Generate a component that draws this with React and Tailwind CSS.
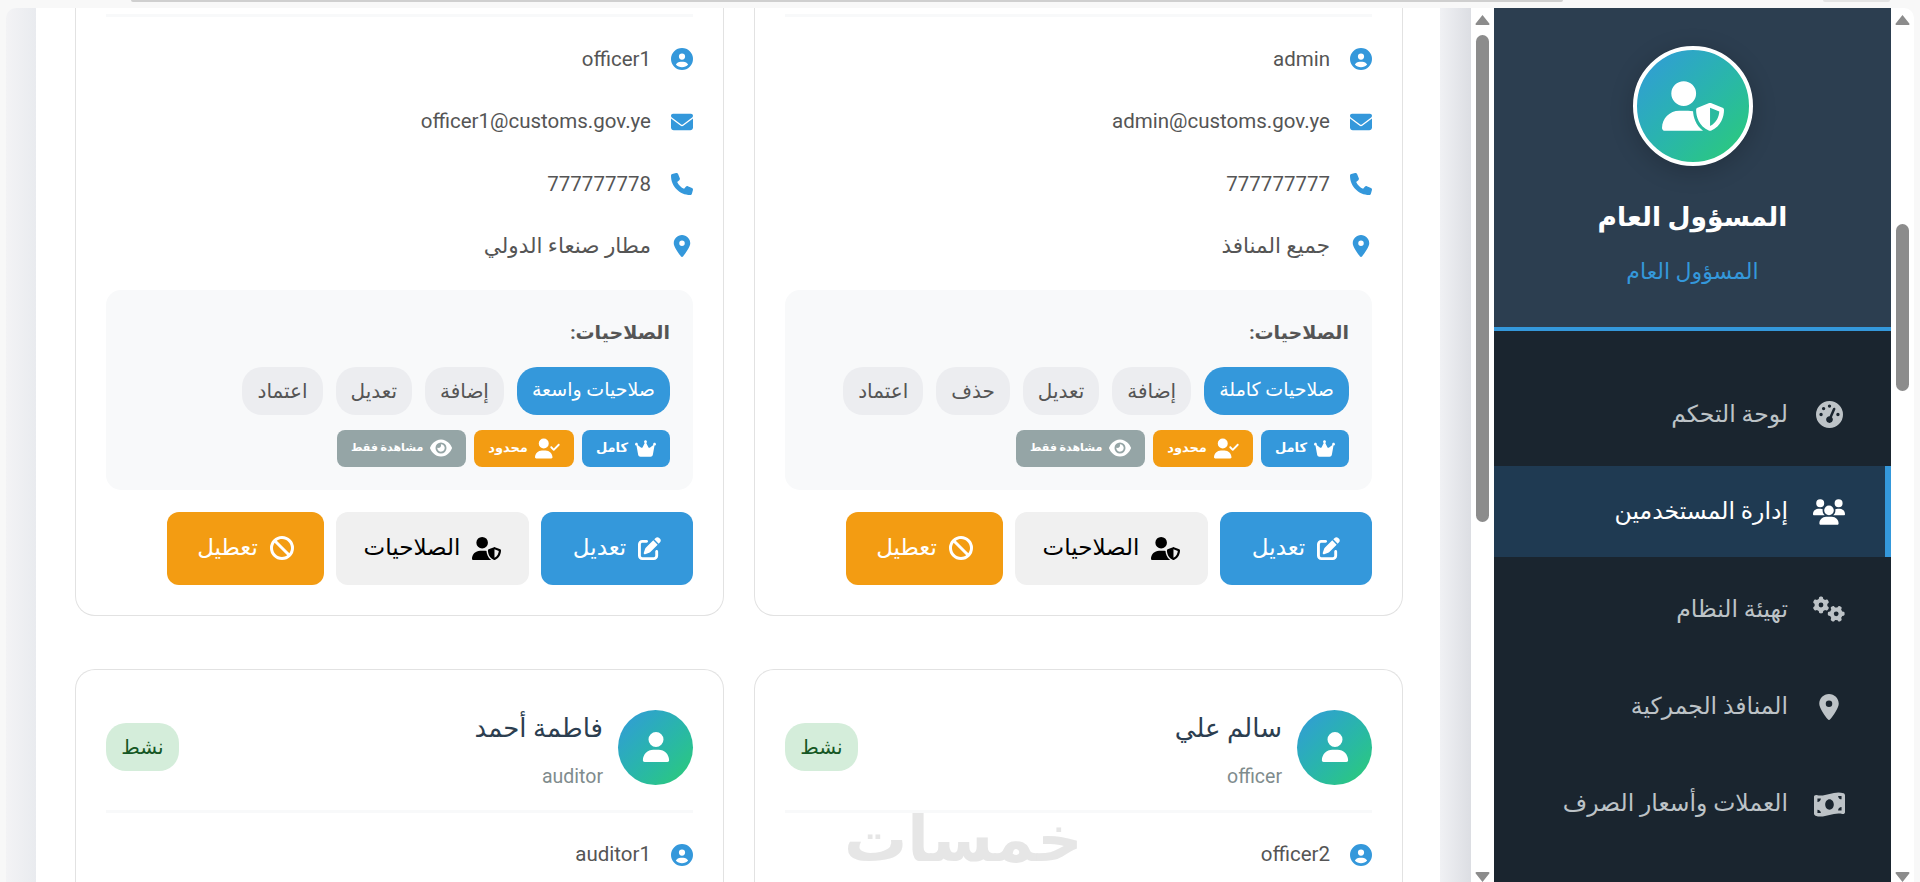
import {
  FaBan,
  FaCircleUser,
  FaCrown,
  FaEnvelope,
  FaEye,
  FaGaugeHigh,
  FaGears,
  FaLocationDot,
  FaMoneyBillWave,
  FaPenToSquare,
  FaPhone,
  FaUser,
  FaUserCheck,
  FaUserShield,
  FaUsers,
} from "react-icons/fa6";

const menuItems = [
  { label: "لوحة التحكم", icon: FaGaugeHigh, size: 27 },
  { label: "إدارة المستخدمين", icon: FaUsers, size: 32, active: true },
  { label: "تهيئة النظام", icon: FaGears, size: 32 },
  { label: "المنافذ الجمركية", icon: FaLocationDot, size: 26 },
  { label: "العملات وأسعار الصرف", icon: FaMoneyBillWave, size: 31 },
];

// the first row is scrolled, only its lower part is on screen
const topUsers = [
  {
    username: "admin",
    email: "admin@customs.gov.ye",
    phone: "777777777",
    port: "جميع المنافذ",
    perms: ["صلاحيات كاملة", "إضافة", "تعديل", "حذف", "اعتماد"],
  },
  {
    username: "officer1",
    email: "officer1@customs.gov.ye",
    phone: "777777778",
    port: "مطار صنعاء الدولي",
    perms: ["صلاحيات واسعة", "إضافة", "تعديل", "اعتماد"],
  },
];

const bottomUsers = [
  { name: "سالم علي", role: "officer", username: "officer2", watermark: true },
  { name: "فاطمة أحمد", role: "auditor", username: "auditor1" },
];

function Triangle({ down }) {
  return (
    <svg viewBox="0 0 14 10" className="h-[10px] w-[15px]" fill="#8c8c8c">
      <path d={down ? "M1 0h12a1 1 0 0 1 .8 1.6L7 10 .2 1.6A1 1 0 0 1 1 0z" : "M7 0l6.8 8.4A1 1 0 0 1 13 10H1a1 1 0 0 1-.8-1.6z"} />
    </svg>
  );
}

function Scrollbar({ top, height }) {
  return (
    <div className="flex h-full w-[23px] shrink-0 flex-col items-center bg-white pt-[7px]">
      <Triangle />
      <div className="w-[13px] shrink-0 rounded-full bg-[#8c8c8c]" style={{ marginTop: top, height }} />
      <div className="mt-auto">
        <Triangle down />
      </div>
    </div>
  );
}

function InfoRow({ icon: Icon, children }) {
  return (
    <div className="flex h-[62.4px] items-center text-[20.5px] text-[#555]">
      <div className="flex w-[42px] shrink-0 justify-start text-[#3498db]">
        <Icon size={22} />
      </div>
      <span>{children}</span>
    </div>
  );
}

function TopCard({ user }) {
  return (
    <div className="rounded-b-[20px] border border-t-0 border-[#e2e2e2] bg-white px-[30px] pb-[30px] pt-[6px]">
      <div className="h-[3px] bg-[#f8f9fa]" />
      <div className="pt-[11px]">
        <InfoRow icon={FaCircleUser}>{user.username}</InfoRow>
        <InfoRow icon={FaEnvelope}>{user.email}</InfoRow>
        <InfoRow icon={FaPhone}>{user.phone}</InfoRow>
        <InfoRow icon={FaLocationDot}>
          <span className="text-[21.5px]">{user.port}</span>
        </InfoRow>
      </div>

      <div className="mt-[12px] rounded-[15px] bg-[#f8f9fa] px-[23px] pb-[23px] pt-[30px]">
        <div className="text-[19px] font-bold leading-[26px] text-[#555]">الصلاحيات:</div>
        <div className="mt-[21px] flex gap-[13px]">
          {user.perms.map((perm, i) => (
            <span
              key={perm}
              className={
                i === 0
                  ? "flex h-[48px] items-center rounded-[20px] bg-[#3498db] px-[15px] text-[19px] text-white"
                  : "flex h-[48px] items-center rounded-[20px] bg-[#ecedf0] px-[15px] text-[20px] text-[#555]"
              }
            >
              {perm}
            </span>
          ))}
        </div>
        <div className="mt-[15px] flex gap-[8px] text-[13px] font-bold text-white">
          <span className="flex h-[37px] items-center gap-[7px] rounded-[8px] bg-[#3498db] px-[14px]">
            <FaCrown size={21} /> كامل
          </span>
          <span className="flex h-[37px] items-center gap-[7px] rounded-[8px] bg-[#f39c12] px-[14px]">
            <FaUserCheck size={25} /> محدود
          </span>
          <span className="flex h-[37px] items-center gap-[7px] rounded-[8px] bg-[#95a5a6] px-[14px] text-[11px]">
            <FaEye size={22} /> مشاهدة فقط
          </span>
        </div>
      </div>

      <div className="mt-[22px] flex gap-[12px] text-[23px]">
        <button className="flex h-[73px] w-[152px] items-center justify-center gap-[12px] rounded-[12px] bg-[#3498db] text-white">
          <FaPenToSquare size={23} /> تعديل
        </button>
        <button className="flex h-[73px] w-[193px] items-center justify-center gap-[12px] rounded-[12px] bg-[#f0f0f0] text-black">
          <FaUserShield size={29} /> الصلاحيات
        </button>
        <button className="flex h-[73px] w-[157px] items-center justify-center gap-[12px] rounded-[12px] bg-[#f39c12] text-white">
          <FaBan size={24} /> تعطيل
        </button>
      </div>
    </div>
  );
}

function BottomCard({ user }) {
  return (
    <div className="relative rounded-t-[20px] border border-b-0 border-[#e2e2e2] bg-white px-[30px] pt-[40px]">
      <div className="flex items-center justify-between border-b-[3px] border-[#f8f9fa] pb-[25px]">
        <div className="flex items-center gap-[15px]">
          <div className="flex h-[75px] w-[75px] items-center justify-center rounded-full bg-gradient-to-br from-[#3498db] to-[#2ecc71] text-white">
            <FaUser size={30} />
          </div>
          <div className="h-[75px]">
            <div className="text-[26px] leading-[36px] text-[#2c3e50]">{user.name}</div>
            <div className="mt-[20px] text-[19.5px] leading-[22px] text-[#7f8c8d]">{user.role}</div>
          </div>
        </div>
        <div className="flex h-[48px] w-[73px] items-center justify-center rounded-[20px] bg-[#d4edda] text-[20px] text-[#155724]">
          نشط
        </div>
      </div>

      <div className="pt-[11px]">
        <InfoRow icon={FaCircleUser}>{user.username}</InfoRow>
      </div>

      {user.watermark && (
        <div className="absolute left-[89px] top-[130px] text-[63px] font-bold leading-[80px] text-[#e6e6e6]">
          خمسات
        </div>
      )}
    </div>
  );
}

export default function App() {
  return (
    <div
      dir="rtl"
      className="flex h-screen w-screen flex-col overflow-hidden bg-[#f8f8f8] font-['Roboto','DejaVu_Sans',sans-serif]"
    >
      <div className="flex h-[8px] shrink-0 gap-[260px] pl-[131px] pr-[30px]">
        <div className="h-[2px] w-[67px] rounded-b-[6px] bg-[#e4e4e4]" />
        <div className="h-[2px] flex-1 rounded-b-[6px] bg-[#cfcfcf]" />
      </div>

      <div className="mx-[6px] flex min-h-0 flex-1 overflow-hidden rounded-t-[10px]">
        <Scrollbar top={199} height={167} />

        <aside className="flex w-[397px] shrink-0 flex-col bg-[#1a252f]">
          <div className="flex h-[323px] shrink-0 flex-col items-center border-b-4 border-[#3498db] bg-[#2c3e50] pt-[38px]">
            <div className="flex h-[120px] w-[120px] items-center justify-center rounded-full border-4 border-white bg-gradient-to-br from-[#3498db] to-[#2ecc71] text-white shadow-[0_5px_25px_rgba(0,0,0,0.2)]">
              <FaUserShield size={62} />
            </div>
            <div className="mt-[31px] text-[26.5px] font-bold leading-[40px] text-white">المسؤول العام</div>
            <div className="mt-[21px] text-[22px] leading-[28px] text-[#3498db]">المسؤول العام</div>
          </div>

          <nav className="flex flex-col gap-[6.4px] pt-[38px]">
            {menuItems.map(({ label, icon: Icon, size, active }) => (
              <div
                key={label}
                className={`flex h-[91px] items-center border-r-[6px] pr-[36px] text-[23.5px] ${
                  active ? "border-[#3498db] bg-[#1f3a52] text-white" : "border-transparent text-[#bdc3c7]"
                }`}
              >
                <div className="flex w-[40px] justify-center">
                  <Icon size={size} />
                </div>
                <span className="mr-[21px]">{label}</span>
              </div>
            ))}
          </nav>
        </aside>

        <Scrollbar top={10} height={487} />

        <div className="w-[31px] shrink-0 bg-gradient-to-r from-[#f0f1f4] to-[#dcdee3]" />

        <main className="flex-1 overflow-hidden bg-white pl-[39px] pr-[37px]">
          <div className="grid grid-cols-2 gap-x-[30px] gap-y-[53px]">
            {topUsers.map((user) => (
              <TopCard key={user.username} user={user} />
            ))}
            {bottomUsers.map((user) => (
              <BottomCard key={user.username} user={user} />
            ))}
          </div>
        </main>

        <div className="w-[30px] shrink-0 bg-gradient-to-r from-[#f3f3f5] to-[#e9ebef]" />
      </div>
    </div>
  );
}
